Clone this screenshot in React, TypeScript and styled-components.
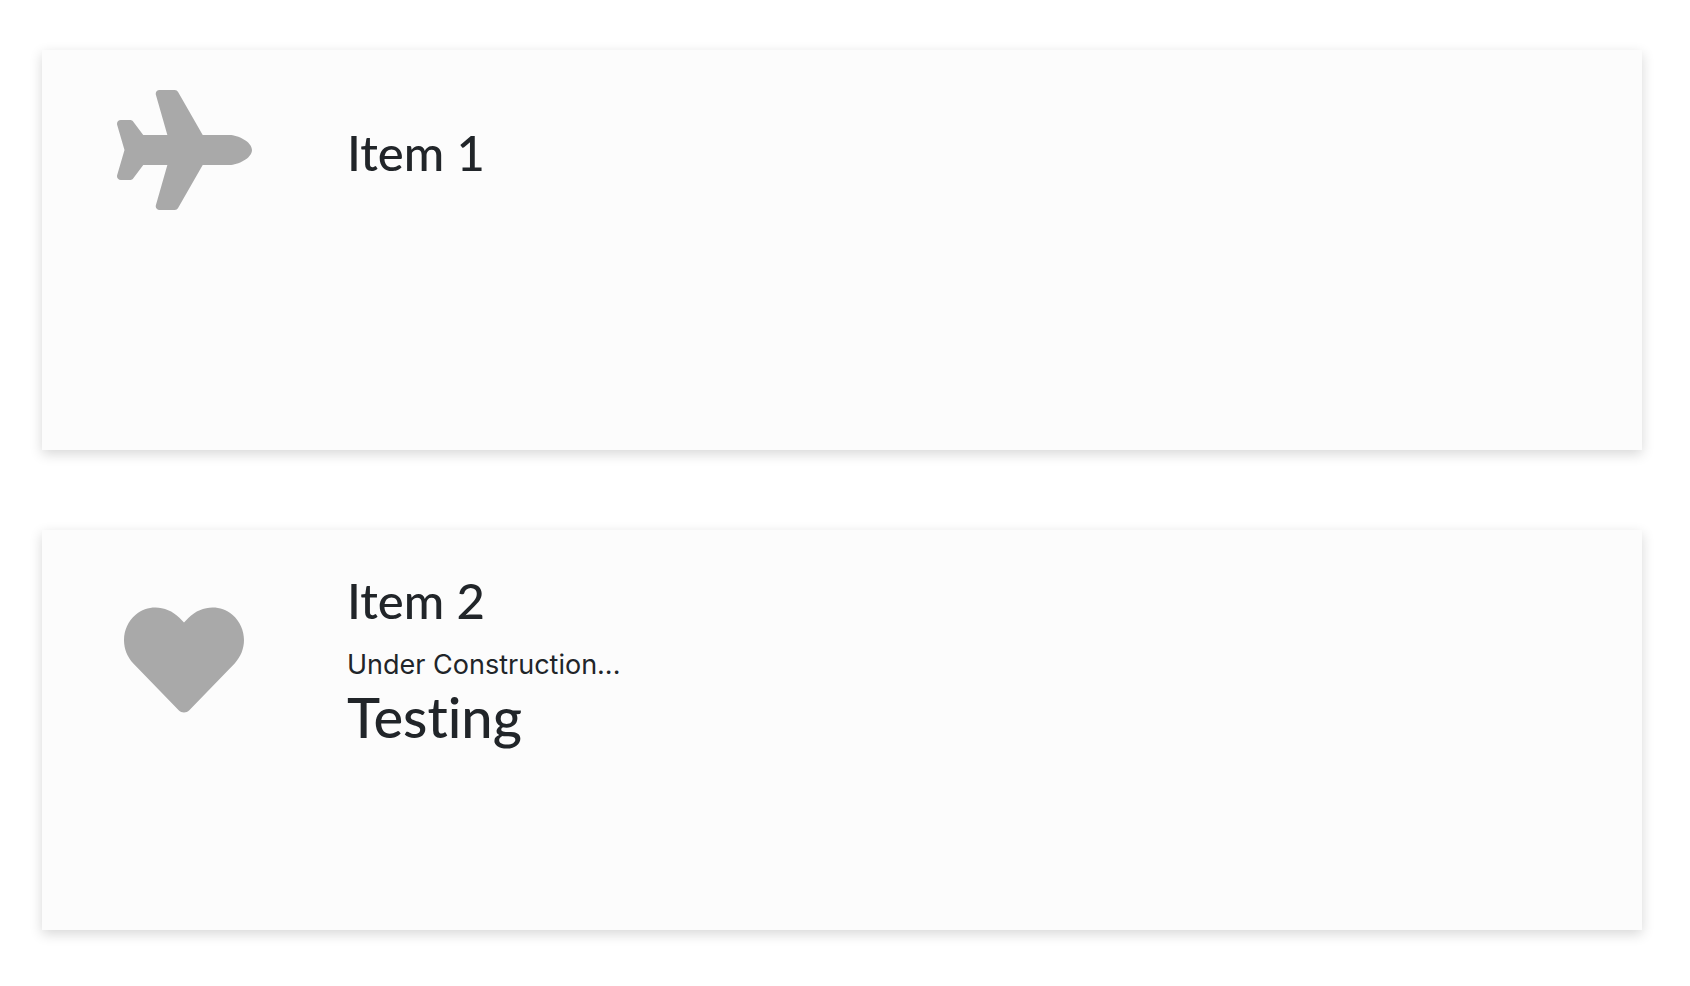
import React from "react";
import styled, { createGlobalStyle } from "styled-components";
import type { IconType } from "react-icons";
import { FaHeart, FaPlane } from "react-icons/fa";

const GlobalStyle = createGlobalStyle`
  *, *::before, *::after {
    box-sizing: border-box;
  }
  body {
    margin: 0;
    background: #fff;
    color: #212529;
    font-family: Inter, "Liberation Sans", sans-serif;
    font-size: 27px;
    line-height: 42px;
    font-variant-ligatures: none;
  }
`;

const List = styled.main`
  display: flex;
  flex-direction: column;
  gap: 80px;
  padding: 50px 48px 56px 42px;
`;

const Card = styled.article`
  min-height: 400px;
  padding: 36px 40px;
  background: #fcfcfc;
  box-shadow: 0 4px 12px rgba(0, 0, 0, 0.16);
`;

const Row = styled.div`
  display: flex;
  align-items: center;
  gap: 61px;
`;

const IconCell = styled.div<{ $iconWidth: number }>`
  display: flex;
  flex: 0 0 204px;
  align-items: center;
  justify-content: center;
  height: 128px;
  color: #a9a9a9;

  svg {
    display: block;
    width: ${({ $iconWidth }) => $iconWidth}px;
    height: 120px;
  }
`;

const Content = styled.div`
  flex: 1;
  min-width: 0;
  padding-top: 4px;
`;

const Title = styled.h2`
  margin: 0;
  font-family: Lato, "Liberation Sans", sans-serif;
  font-size: 49px;
  font-weight: 500;
  line-height: 60px;
`;

const Details = styled.div`
  padding: 14px 0 6px;
`;

const Note = styled.p`
  margin: 0;
`;

const Subtitle = styled.h3`
  margin: 0;
  font-family: Lato, "Liberation Sans", sans-serif;
  font-size: 56px;
  font-weight: 500;
  line-height: 62px;
`;

interface ItemProps {
  icon: IconType;
  iconWidth?: number;
  title: string;
  children?: React.ReactNode;
}

function Item({ icon: Icon, iconWidth = 120, title, children }: ItemProps) {
  return (
    <Card>
      <Row>
        <IconCell $iconWidth={iconWidth}>
          <Icon aria-hidden="true" />
        </IconCell>
        <Content>
          <Title>{title}</Title>
          {children && <Details>{children}</Details>}
        </Content>
      </Row>
    </Card>
  );
}

export default function App() {
  return (
    <>
      <GlobalStyle />
      <List>
        <Item icon={FaPlane} iconWidth={135} title="Item 1" />
        <Item icon={FaHeart} title="Item 2">
          <Note>Under Construction...</Note>
          <Subtitle>Testing</Subtitle>
        </Item>
      </List>
    </>
  );
}
